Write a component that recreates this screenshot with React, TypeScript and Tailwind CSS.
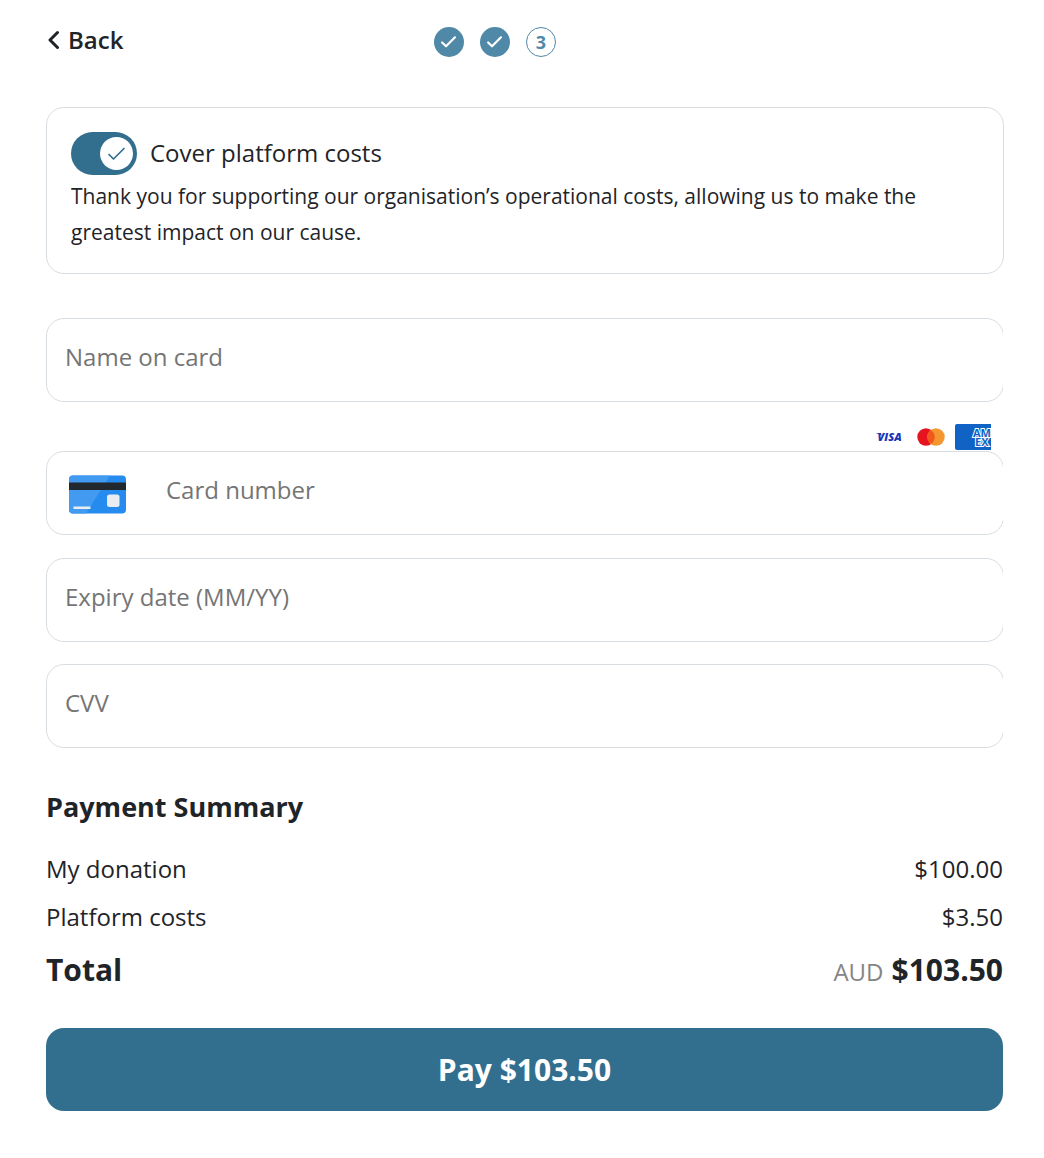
import React, { useState } from "react";

const field =
  "block h-21 w-[calc(100%+1px)] rounded-[18px] border border-[#d8dde1] bg-white px-[18px] pb-2 text-2xl text-[#1f2428] placeholder:text-[#757575] placeholder:opacity-100 outline-none";

function Check({ className }: { className: string }) {
  return (
    <svg viewBox="0 0 18 14" className={className} fill="none" stroke="currentColor" strokeLinecap="round" strokeLinejoin="round" aria-hidden="true">
      <path d="M1 7.500 5.500 12 16 1.500" />
    </svg>
  );
}

function VisaLogo() {
  return (
    <svg viewBox="0 0 25 10" className="h-[10px] w-[25px] overflow-visible" role="img" aria-label="Visa" fill="#1a34b8">
      <path d="M.5 1h4.500l.8 3C4.700 2.600 2.700 1.800.5 1.500z" />
      <text x="1.500" y="9" fontFamily="Open Sans, sans-serif" fontSize="11" fontWeight="800" fontStyle="italic">VISA</text>
    </svg>
  );
}

function MastercardLogo() {
  return (
    <svg viewBox="0 0 28 18" className="h-[18px] w-7" role="img" aria-label="Mastercard">
      <circle cx="9" cy="9" r="8.700" fill="#e5141f" />
      <circle cx="19" cy="9" r="8.700" fill="#f49731" />
      <path d="M14 1.880a8.700 8.700 0 0 1 0 14.240 8.700 8.700 0 0 1 0-14.240z" fill="#f2581b" />
    </svg>
  );
}

function AmexLogo() {
  return (
    <svg viewBox="0 0 36 26" className="h-[26px] w-9" role="img" aria-label="American Express">
      <path d="M2 0H36V26H2a2 2 0 0 1-2-2V2a2 2 0 0 1 2-2z" fill="#1063c4" />
      <text fill="#1063c4" stroke="#fff" strokeWidth="2" paintOrder="stroke" fontFamily="Open Sans, sans-serif" fontWeight="700" fontSize="11">
        <tspan x="18" y="13">AM</tspan>
        <tspan x="20" y="22">EX</tspan>
      </text>
    </svg>
  );
}

function CardIcon() {
  return (
    <svg viewBox="0 0 57 39" className="h-[39px] w-[57px]" aria-hidden="true">
      <rect y=".5" width="57" height="38" rx="4" fill="#268bee" />
      <path d="M4 .5H41L17 38.500H4a4 4 0 0 1-4-4V4.500a4 4 0 0 1 4-4z" fill="#429bf0" />
      <path d="M0 7.500H57V15H0z" fill="#22292e" />
      <rect x="38" y="19.500" width="12.500" height="12.500" rx="2.500" fill="#e9edf1" />
      <path d="M4.500 31.500h17v2.500h-17z" fill="#e9edf1" />
    </svg>
  );
}

function Step() {
  return (
    <li className="flex size-[30px] items-center justify-center rounded-full bg-[#5089a7] text-white">
      <Check className="h-3 w-4 stroke-[2.5]" />
    </li>
  );
}

function Field({ label, id }: { label: string; id: string }) {
  return (
    <div className="overflow-hidden">
      <label htmlFor={id} className="sr-only">{label}</label>
      <input id={id} placeholder={label} className={field} />
    </div>
  );
}

export default function App() {
  const [cover, setCover] = useState(true);
  const total = cover ? "$103.50" : "$100.00";
  return (
    <main className="bg-white pt-[22px] pr-[41px] pb-12 pl-[46px] font-['Open_Sans',sans-serif] text-2xl text-[#1f2428]">
      <header className="grid grid-cols-[1fr_auto_1fr] items-center pr-[59px]">
        <button type="button" className="flex items-center gap-2 justify-self-start pl-0.5 leading-9 font-semibold">
          <svg viewBox="0 0 12 20" className="h-5 w-3" fill="none" stroke="currentColor" strokeWidth="3" strokeLinecap="round" strokeLinejoin="round" aria-hidden="true">
            <path d="M9.500 2.500 2 10 9.500 17.500" />
          </svg>
          Back
        </button>
        <ol className="flex gap-4 pt-1">
          <Step />
          <Step />
          <li className="flex size-[30px] items-center justify-center rounded-full border border-[#5089a7] text-lg font-bold text-[#5089a7]">3</li>
        </ol>
      </header>

      <section className="-mr-px mt-[49px] rounded-[18px] border border-[#d8dde1] px-6 pt-6 pb-[23px]">
        <label className="flex items-center gap-[13px]">
          <span className="relative h-[43px] w-[66px] shrink-0">
            <input type="checkbox" role="switch" checked={cover} onChange={(e) => setCover(e.target.checked)} className="peer block size-full appearance-none rounded-full bg-gray-400 checked:bg-[#326f8f]" />
            <span className="pointer-events-none absolute top-[5px] left-1 flex size-[33px] items-center justify-center rounded-full bg-white text-[#326f8f] peer-checked:left-[29px]">
              <Check className="h-[14px] w-[18px] stroke-[1.7]" />
            </span>
          </span>
          <span className="pb-0.5">Cover platform costs</span>
        </label>
        <p className="mt-[3px] text-[21px] leading-9">
          Thank you for supporting our organisation’s operational costs, allowing us to make the greatest impact on our cause.
        </p>
      </section>

      <form onSubmit={(e) => e.preventDefault()}>
        <div className="mt-11">
          <Field id="name" label="Name on card" />
        </div>
        <div className="mt-[22px] mb-px flex items-center justify-end pr-3">
          <VisaLogo />
          <span className="ml-4"><MastercardLogo /></span>
          <span className="ml-[10px]"><AmexLogo /></span>
        </div>
        <div className="relative overflow-hidden">
          <label htmlFor="number" className="absolute top-6 left-[23px]">
            <CardIcon />
            <span className="sr-only">Card number</span>
          </label>
          <input id="number" placeholder="Card number" inputMode="numeric" className={field + " pl-[119px]"} />
        </div>
        <div className="mt-[23px] flex flex-col gap-[22px]">
          <Field id="expiry" label="Expiry date (MM/YY)" />
          <Field id="cvv" label="CVV" />
        </div>

        <h2 className="mt-[39px] text-[27px] leading-10 font-bold">Payment Summary</h2>
        <dl className="mt-[18px]">
          <div className="flex justify-between leading-12">
            <dt>My donation</dt>
            <dd>$100.00</dd>
          </div>
          <div className="flex justify-between leading-12">
            <dt>Platform costs</dt>
            <dd>{cover ? "$3.50" : "$0.00"}</dd>
          </div>
          <div className="flex items-baseline justify-between text-[30px] leading-[58px] font-bold">
            <dt>Total</dt>
            <dd>
              <span className="mr-2 text-2xl font-normal text-[#858585]">AUD</span>
              {total}
            </dd>
          </div>
        </dl>
        <button type="submit" className="mt-[29px] h-[83px] w-full rounded-[18px] bg-[#326f8f] text-[30px] font-bold text-white">
          Pay {total}
        </button>
      </form>
    </main>
  );
}
